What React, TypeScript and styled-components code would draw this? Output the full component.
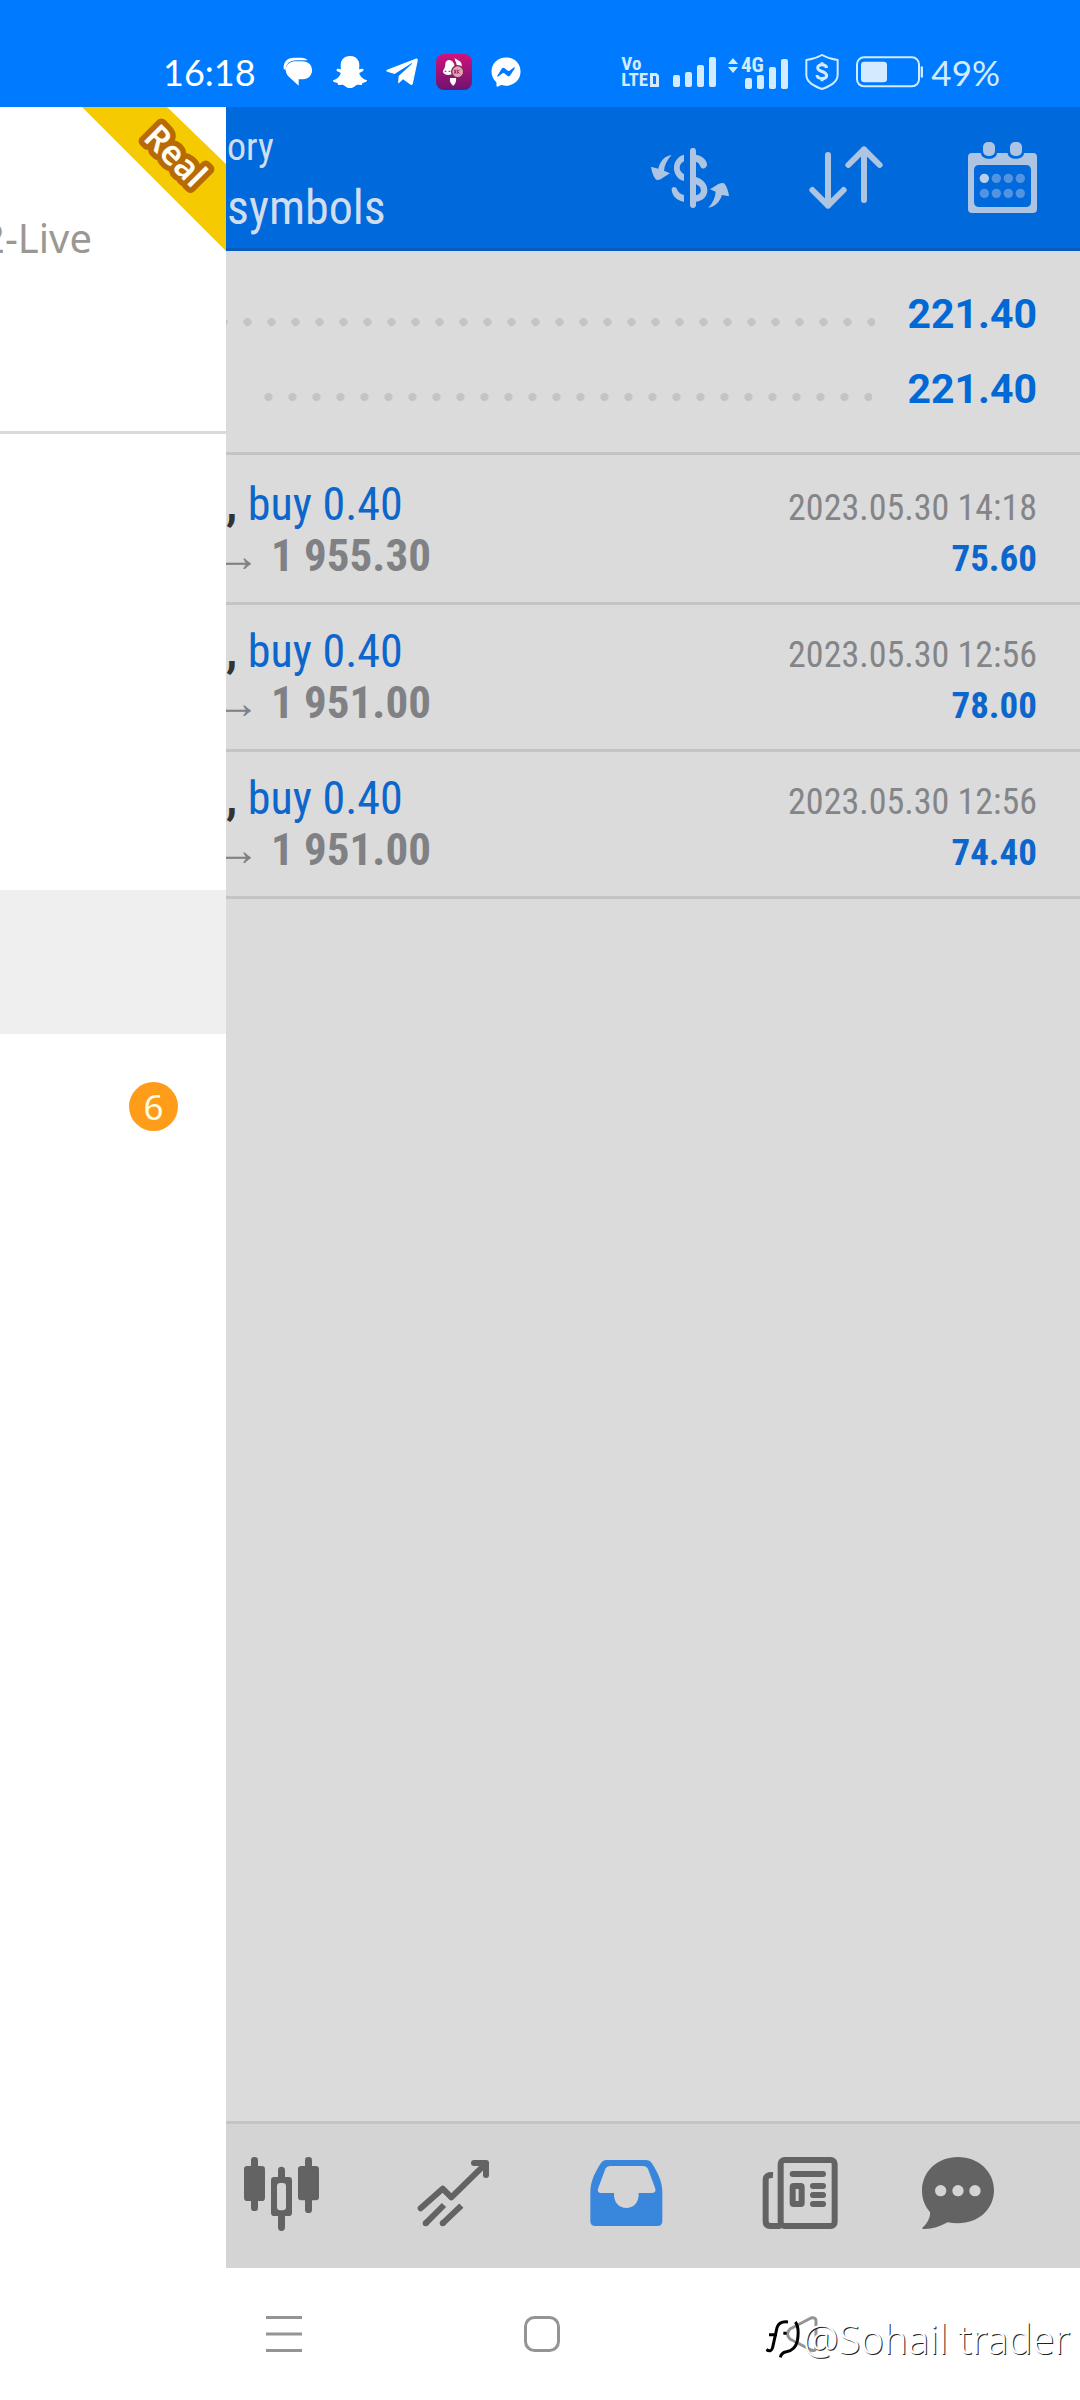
import React from "react";
import styled, { createGlobalStyle } from "styled-components";
import { FaFacebookMessenger, FaSnapchatGhost, FaTelegramPlane } from "react-icons/fa";

const condensed = `"Roboto Condensed", "Liberation Sans Narrow", Roboto, sans-serif`;
const humanist = `"Noto Sans", "Open Sans", sans-serif`;

const GlobalStyle = createGlobalStyle`
  * { box-sizing: border-box; }
  body { margin: 0; background: #ffffff; font-family: ${condensed}; }
  button { border: 0; padding: 0; background: none; font: inherit; color: inherit; display: flex; }
  svg { display: block; flex: none; }
`;

const Screen = styled.div`
  min-height: 100vh;
  display: flex;
  flex-direction: column;
  overflow: hidden;
`;

/* ---------- status bar ---------- */

const StatusBar = styled.div`
  height: 107px;
  padding: 37px 80px 0 163px;
  display: flex;
  justify-content: space-between;
  background: #007bff;
  font-family: Lato, sans-serif;
  font-size: 36px;
  line-height: 70px;
`;

const StatusRow = styled.div<{ $tint: string; $gap: number }>`
  height: 70px;
  display: flex;
  align-items: center;
  gap: ${(p) => p.$gap}px;
  color: ${(p) => p.$tint};
`;

const IconSlot = styled.span`
  width: 36px;
  height: 36px;
  display: flex;
  align-items: center;
  justify-content: center;
`;

const Clock = styled.time`
  width: 101px;
`;

const Percent = styled.span`
  font-size: 35px;
`;

const Volte = styled.span`
  width: 36px;
  font: 700 19px/16px ${condensed};
  display: grid;
`;

const VolteLine = styled.span`
  display: flex;
  align-items: center;
  gap: 2px;
`;

/* ---------- body ---------- */

const Body = styled.div`
  flex: 1;
  display: grid;
  grid-template-columns: 226px 1fr;
`;

const Drawer = styled.aside`
  background: #ffffff;
  overflow: hidden;
`;

const Account = styled.div`
  position: relative;
  height: 327px;
  padding: 103px 134px 0 0;
  border-bottom: 3px solid #d9d9d9;
  display: flex;
  justify-content: flex-end;
  align-items: flex-start;
  font: 400 40px/56px ${humanist};
  color: #9b9792;
  white-space: nowrap;
`;

const Ribbon = styled.svg`
  position: absolute;
  top: 0;
  right: 0;
`;

const DrawerMenu = styled.nav`
  padding-top: 24px;
`;

const DrawerItem = styled.a<{ $active?: boolean }>`
  height: 144px;
  padding-right: 48px;
  display: flex;
  align-items: center;
  justify-content: flex-end;
  text-decoration: none;
  background: ${(p) => (p.$active ? "#efefef" : "transparent")};
`;

const Badge = styled.span`
  width: 49px;
  height: 49px;
  border-radius: 50%;
  background: #ff9d1a;
  color: #fffbe0;
  font: 400 35px/49px ${humanist};
  text-align: center;
`;

const Main = styled.main`
  display: flex;
  flex-direction: column;
  min-width: 0;
  background: #dbdbdb;
`;

const Header = styled.header`
  height: 144px;
  padding-right: 40px;
  display: flex;
  align-items: center;
  gap: 80px;
  background: #0069dc;
  border-bottom: 3px solid #0a5cb8;
  color: #adc4e2;
`;

const Titles = styled.div`
  flex: 1;
  align-self: flex-start;
  padding: 16px 0 0 1px;
  color: #d0ddee;
`;

const ScreenName = styled.div`
  font-size: 38px;
  line-height: 49px;
`;

const Filter = styled.h1`
  margin: 8px 0 0;
  font-size: 48px;
  line-height: 56px;
  font-weight: 400;
`;

const Summary = styled.section`
  padding: 26px 43px 25px 0;
  border-bottom: 3px solid #c4c4c4;
  box-shadow: inset 0 2px #d0dcef;
`;

const SummaryLine = styled.div<{ $indent: number }>`
  height: 75px;
  padding-left: ${(p) => p.$indent}px;
  display: flex;
  gap: 32px;
  font: 700 41px/75px Roboto, sans-serif;
  color: #0069d6;
`;

const Leader = styled.span<{ $end: number }>`
  flex: 1;
  height: 8px;
  margin: 41px ${(p) => p.$end}px 0 0;
  background: radial-gradient(circle at 20px 4px, #c4c4c4 4px, transparent 4px) right top / 24px 8px repeat-x;
`;

const Deals = styled.ul`
  flex: 1;
  margin: 0;
  padding: 3px 0 0;
  list-style: none;
`;

const Deal = styled.li`
  padding: 21px 43px 21px 0;
  border-bottom: 3px solid #c4c4c4;
`;

const DealLine = styled.div`
  display: flex;
  justify-content: space-between;
  align-items: baseline;
  height: 51px;
  line-height: 51px;
`;

const Order = styled.span`
  font-size: 46px;
  color: #0d66cb;
  white-space: pre;

  b { color: #333333; }
`;

const ClosePrice = styled.span`
  display: flex;
  align-items: baseline;
  font-size: 45px;
  font-weight: 700;
  color: #808184;
`;

const Arrow = styled.span`
  width: 45px;
  padding-right: 11px;
  display: flex;
  justify-content: flex-end;
  overflow: hidden;
  font: 700 45px/51px "Liberation Sans", sans-serif;
`;

const Time = styled.time`
  font-size: 36px;
  color: #848588;
`;

const Profit = styled.span`
  font-size: 37px;
  font-weight: 700;
  color: #0d66cb;
`;

const Tabs = styled.nav`
  height: 147px;
  padding: 33px 73px 0 18px;
  border-top: 3px solid #c4c4c4;
  background: #d4d4d4;
  display: flex;
  justify-content: space-between;
  align-items: flex-start;
`;

const Tab = styled.button<{ $active?: boolean }>`
  && { color: ${(p) => (p.$active ? "#3987dc" : "#636363")}; }
`;

/* ---------- system navigation ---------- */

const SystemNav = styled.footer`
  position: relative;
  height: 132px;
  padding: 48px 262px 0 266px;
  display: flex;
  justify-content: space-between;
  align-items: flex-start;
  background: #ffffff;
  color: #949494;
`;

const Watermark = styled.div`
  position: absolute;
  right: 10px;
  bottom: 34px;
  display: flex;
  align-items: center;
  gap: 2px;
  font: 300 40px/54px ${humanist};
  color: #ffffff;
  text-shadow: 1px 1px 0 #222222;
  white-space: nowrap;
`;

/* ---------- icons ---------- */

const MessagesIcon = () => (
  <svg width="30" height="30" viewBox="430 85 90 90" fill="currentColor">
    <path d="M432 121C430 100 442 87 464 87H484C494 87 500 90 504 95H470C450 95 438 106 438 124Z" />
    <path d="M468 98H488C506 98 517 109 517 125C517 141 506 151 490 152H477V171L446 143C430 124 440 98 468 98Z" />
  </svg>
);

const AppBadgeIcon = () => (
  <svg width="36" height="36" viewBox="0 0 108 108">
    <defs>
      <linearGradient id="badge" x1="0" y1="0" x2="0" y2="1">
        <stop offset="0" stopColor="#d0127c" />
        <stop offset="1" stopColor="#6b1470" />
      </linearGradient>
    </defs>
    <rect width="108" height="108" rx="24" fill="url(#badge)" />
    <path d="M28 30C28 16 46 14 52 26C58 32 54 44 52 54C50 66 24 66 21 54C20 48 28 44 28 30Z" fill="#fff" />
    <path d="M56 12C66 20 80 22 77 38H62C64 28 56 22 56 12Z" fill="#fff" />
    <path d="M42 72H60C62 82 56 94 51 95C44 88 40 82 42 72Z" fill="#fff" />
    <path d="M26 52h5m7 0h5" stroke="#7b1a57" strokeWidth="3" />
    <circle cx="65" cy="53" r="18" fill="#e3a3bb" stroke="#7b2b51" strokeWidth="4" />
    <path d="M55 47l5 12m0-12l-5 12m9-12v12m7-12l-6 6 6 6" stroke="#a02a62" strokeWidth="3" fill="none" />
  </svg>
);

const bars = [
  [0, 18, 12],
  [12, 15, 15],
  [24, 8, 22],
  [36, 0, 30],
];

const SignalIcon = () => (
  <svg width="43" height="30" fill="currentColor">
    {bars.map(([x, y, h]) => (
      <rect key={x} x={x} y={y} width="7" height={h} rx="2" />
    ))}
  </svg>
);

const MobileDataIcon = () => (
  <svg width="60" height="34" viewBox="0 -4 60 34" fill="currentColor" overflow="visible">
    <path d="M5 -1L10 5H0ZM0 8H10L5 14Z" />
    <rect x="17" y="19" width="7" height="11" rx="2" />
    <rect x="29" y="16" width="7" height="14" rx="2" />
    <rect x="41" y="8" width="7" height="22" rx="2" />
    <rect x="53" y="0" width="7" height="30" rx="2" />
    <text x="13" y="13" fontSize="21" fontWeight="700" fontFamily={condensed}>4G</text>
  </svg>
);

const ShieldIcon = () => (
  <svg width="36" height="36" viewBox="612 72 108 108" fill="none" stroke="currentColor">
    <path d="M666 75C650 84 635 88 619 90V134C619 157 642 168 666 177C690 168 713 157 713 134V90C697 88 682 84 666 75Z" strokeWidth="6" strokeLinejoin="round" />
    <path d="M680 114C678 101 653 101 653 113C653 127 680 122 680 137C680 149 652 149 651 135M666 97V105M666 146V154" strokeWidth="9" />
  </svg>
);

const BatteryIcon = () => (
  <svg width="67" height="32" viewBox="771 80 201 96">
    <rect x="774" y="84" width="186" height="87" rx="21" fill="none" stroke="currentColor" strokeWidth="6" />
    <rect x="786" y="97" width="78" height="62" rx="10" fill="currentColor" />
    <rect x="965" y="111" width="7" height="34" rx="3" fill="currentColor" />
  </svg>
);

const CurrencyIcon = () => (
  <svg width="78" height="60" viewBox="93 111 234 180" fill="currentColor">
    <path d="M155 132C137 134 121 147 115 173L93 167C95 181 99 193 107 205C111 209 120 207 126 202L150 187L132 179C133 163 141 147 155 132Z" />
    <path d="M265 290C283 288 300 273 306 252L327 256C326 242 321 229 314 218C310 214 301 216 294 220L270 235L287 242C286 259 279 275 265 290Z" />
    <path d="M192 131V151C175 160 175 180 192 190V210C153 200 151 142 192 131Z" />
    <path d="M155 237C153 227 167 224 171 235C174 244 182 250 192 252V272C171 269 157 256 155 237Z" />
    <path d="M210 119C210 108 228 108 228 119V131C246 134 263 148 261 163C258 175 244 176 240 164C238 158 234 154 228 152V198C274 211 273 267 228 272V283C228 294 210 294 210 283ZM228 220V253C247 249 248 228 228 220Z" fillRule="evenodd" />
  </svg>
);

const SortIcon = () => (
  <svg width="76" height="63" viewBox="567 111 228 189" fill="none" stroke="currentColor" strokeWidth="18" strokeLinecap="round" strokeLinejoin="round">
    <path d="M624 138V290M577 243L624 290L671 243" />
    <path d="M732 273V121M685 168L732 121L779 168" />
  </svg>
);

const CalendarIcon = () => (
  <svg width="75" height="71" viewBox="1035 96 225 213" fill="currentColor">
    <path
      fillRule="evenodd"
      d="M1056 129H1083C1083 152 1131 152 1131 129H1163C1163 152 1212 152 1212 129H1239Q1251 129 1251 141V297Q1251 309 1239 309H1056Q1044 309 1044 297V141Q1044 129 1056 129ZM1078 165Q1062 165 1062 181V275Q1062 291 1078 291H1217Q1233 291 1233 275V181Q1233 165 1217 165Z"
    />
    <rect x="1089" y="96" width="36" height="42" rx="15" />
    <rect x="1170" y="96" width="36" height="42" rx="15" />
    {[1093, 1129, 1165, 1201].map((x) =>
      [205, 250].map((y) => (
        <circle key={`${x}-${y}`} cx={x} cy={y} r="14" fill={x === 1093 && y === 205 ? "#b9cfea" : "#5294e2"} />
      ))
    )}
  </svg>
);

const CandlesIcon = () => (
  <svg width="75" height="75" viewBox="72 141 225 225" fill="currentColor">
    <rect x="93" y="141" width="21" height="162" rx="10" />
    <rect x="72" y="168" width="63" height="105" rx="10" />
    <rect x="255" y="141" width="21" height="168" rx="10" />
    <rect x="234" y="168" width="63" height="103" rx="10" />
    <path d="M174 201V181Q174 170 184 170Q195 170 195 181V201H206Q216 201 216 211V308Q216 318 206 318H195V352Q195 363 184 363Q174 363 174 352V318H163Q153 318 153 308V211Q153 201 163 201ZM181 219Q171 219 171 229V291Q171 301 181 301H188Q198 301 198 291V229Q198 219 188 219Z" fillRule="evenodd" />
  </svg>
);

const TrendIcon = () => (
  <svg width="75" height="75" viewBox="588 141 225 225" fill="none" stroke="currentColor" strokeWidth="18" strokeLinejoin="round">
    <path d="M602 295L668 236L694 262L798 160M762 159H798V195" strokeLinecap="round" />
    <path d="M617 340L672 285M668 340L724 287" />
    <path d="M617 340h.1M668 340h.1" strokeLinecap="round" />
  </svg>
);

const InboxIcon = () => (
  <svg width="75" height="75" viewBox="1104 141 225 225" fill="currentColor">
    <path
      fillRule="evenodd"
      d="M1160 150H1278Q1289 150 1295 159C1314 188 1327 215 1327 247V333Q1327 348 1312 348H1126Q1111 348 1111 333V247C1111 215 1124 188 1143 159Q1149 150 1160 150ZM1172 168Q1160 168 1156 177L1134 236Q1131 249 1144 249H1182C1178 309 1260 309 1256 249H1295Q1309 249 1306 236L1284 177Q1280 168 1268 168Z"
    />
  </svg>
);

const NewsIcon = () => (
  <svg width="75" height="75" viewBox="360 141 225 225" overflow="visible" fill="none" stroke="currentColor">
    <path d="M399 195C384 194 377 199 377 209V334Q377 348 391 348H422" strokeWidth="18" />
    <rect x="422" y="150" width="162" height="198" rx="12" strokeWidth="18" />
    <path d="M458 192H549M519 228H549M519 255H549M519 282H549" strokeWidth="18" strokeLinecap="round" />
    <rect x="458" y="228" width="27" height="54" rx="3" strokeWidth="18" />
  </svg>
);

const ChatIcon = () => (
  <svg width="75" height="75" viewBox="876 141 225 225" overflow="visible">
    <path d="M847 353C861 342 872 322 870 306C856 290 846 268 846 242C846 184 893 141 954 141C1015 141 1062 184 1062 241C1062 298 1015 340 954 340Q938 340 923 337C899 350 875 358 850 357Q845 356 847 353Z" fill="currentColor" />
    {[902, 954, 1005].map((x) => (
      <circle key={x} cx={x} cy="242" r="17" fill="#d4d4d4" />
    ))}
  </svg>
);

const LogoMark = () => (
  <svg width="36" height="42" viewBox="186 196 108 126" fill="none" stroke="#000000" strokeWidth="9">
    <path d="M190 291Q206 300 209 284L222 225Q228 205 255 208M198 246H222M241 242h10" />
    <path d="M277 208Q290 225 283 265Q277 293 250 297Q235 300 232 314" />
  </svg>
);

/* ---------- data ---------- */

const deals = [
  { side: "buy 0.40", time: "2023.05.30 14:18", price: "1 955.30", profit: "75.60" },
  { side: "buy 0.40", time: "2023.05.30 12:56", price: "1 951.00", profit: "78.00" },
  { side: "buy 0.40", time: "2023.05.30 12:56", price: "1 951.00", profit: "74.40" },
];

const tabs = [
  { label: "Chart", Icon: CandlesIcon },
  { label: "Trade", Icon: TrendIcon },
  { label: "History", Icon: InboxIcon, active: true },
  { label: "News", Icon: NewsIcon },
  { label: "Messages", Icon: ChatIcon },
];

export default function App() {
  return (
    <Screen>
      <GlobalStyle />
      <StatusBar>
        <StatusRow $tint="#ffffff" $gap={16}>
          <Clock>16:18</Clock>
          <IconSlot><MessagesIcon /></IconSlot>
          <IconSlot><FaSnapchatGhost size={34} /></IconSlot>
          <IconSlot><FaTelegramPlane size={36} /></IconSlot>
          <IconSlot><AppBadgeIcon /></IconSlot>
          <IconSlot><FaFacebookMessenger size={30} /></IconSlot>
        </StatusRow>
        <StatusRow $tint="#d4ebff" $gap={16}>
          <Volte>
            <span>Vo</span>
            <VolteLine>
              LTE
              <svg width="9" height="14" viewBox="0 0 9 14" fill="none" stroke="currentColor" strokeWidth="3">
                <path d="M1.5 1.5H6L7.5 3V12.5H1.5Z" />
              </svg>
            </VolteLine>
          </Volte>
          <StatusRow $tint="inherit" $gap={12}>
            <SignalIcon />
            <MobileDataIcon />
          </StatusRow>
          <ShieldIcon />
          <StatusRow $tint="inherit" $gap={8}>
            <BatteryIcon />
            <Percent>49%</Percent>
          </StatusRow>
        </StatusRow>
      </StatusBar>

      <Body>
        <Drawer>
          <Account>
            2-Live
            <Ribbon width="144" height="144" viewBox="0 0 144 144">
              <path d="M0 0H85L144 57V144Z" fill="#f6ca00" />
              <text
                transform="translate(60 32) rotate(45)"
                fontFamily={humanist}
                fontSize="34"
                fontWeight="600"
                fill="#fffdf2"
                stroke="#b86a05"
                strokeWidth="11"
                strokeLinejoin="round"
                paintOrder="stroke"
              >
                Real
              </text>
            </Ribbon>
          </Account>
          <DrawerMenu>
            <DrawerItem href="#quotes" aria-label="Quotes" />
            <DrawerItem href="#chart" aria-label="Chart" />
            <DrawerItem href="#trade" aria-label="Trade" />
            <DrawerItem href="#history" aria-label="History" $active />
            <DrawerItem href="#mailbox" aria-label="Mailbox">
              <Badge>6</Badge>
            </DrawerItem>
          </DrawerMenu>
        </Drawer>

        <Main>
          <Header>
            <Titles>
              <ScreenName>ory</ScreenName>
              <Filter>symbols</Filter>
            </Titles>
            <button aria-label="Symbols"><CurrencyIcon /></button>
            <button aria-label="Sort"><SortIcon /></button>
            <button aria-label="Period"><CalendarIcon /></button>
          </Header>

          <Summary>
            <SummaryLine $indent={0}>
              <Leader $end={0} />
              221.40
            </SummaryLine>
            <SummaryLine $indent={36}>
              <Leader $end={3} />
              221.40
            </SummaryLine>
          </Summary>

          <Deals>
            {deals.map((deal, i) => (
              <Deal key={i}>
                <DealLine>
                  <Order><b>,</b> {deal.side}</Order>
                  <Time>{deal.time}</Time>
                </DealLine>
                <DealLine>
                  <ClosePrice>
                    <Arrow>→</Arrow>
                    {deal.price}
                  </ClosePrice>
                  <Profit>{deal.profit}</Profit>
                </DealLine>
              </Deal>
            ))}
          </Deals>

          <Tabs>
            {tabs.map(({ label, Icon, active }) => (
              <Tab key={label} aria-label={label} $active={active}>
                <Icon />
              </Tab>
            ))}
          </Tabs>
        </Main>
      </Body>

      <SystemNav>
        <button aria-label="Recent apps">
          <svg width="36" height="36" fill="none" stroke="currentColor" strokeWidth="3">
            <path d="M0 1.5H36M0 18H36M0 34.5H36" />
          </svg>
        </button>
        <button aria-label="Home">
          <svg width="36" height="36" fill="none" stroke="currentColor" strokeWidth="3">
            <rect x="1.5" y="1.5" width="33" height="33" rx="9" />
          </svg>
        </button>
        <button aria-label="Back">
          <svg width="36" height="36" fill="none" stroke="currentColor" strokeWidth="3" strokeLinejoin="round">
            <path d="M29 2L8 13Q3 18 8 23L29 34Q34 36 34 31V5Q34 1 29 2Z" />
          </svg>
        </button>
        <Watermark>
          <LogoMark />
          @Sohail trader
        </Watermark>
      </SystemNav>
    </Screen>
  );
}
